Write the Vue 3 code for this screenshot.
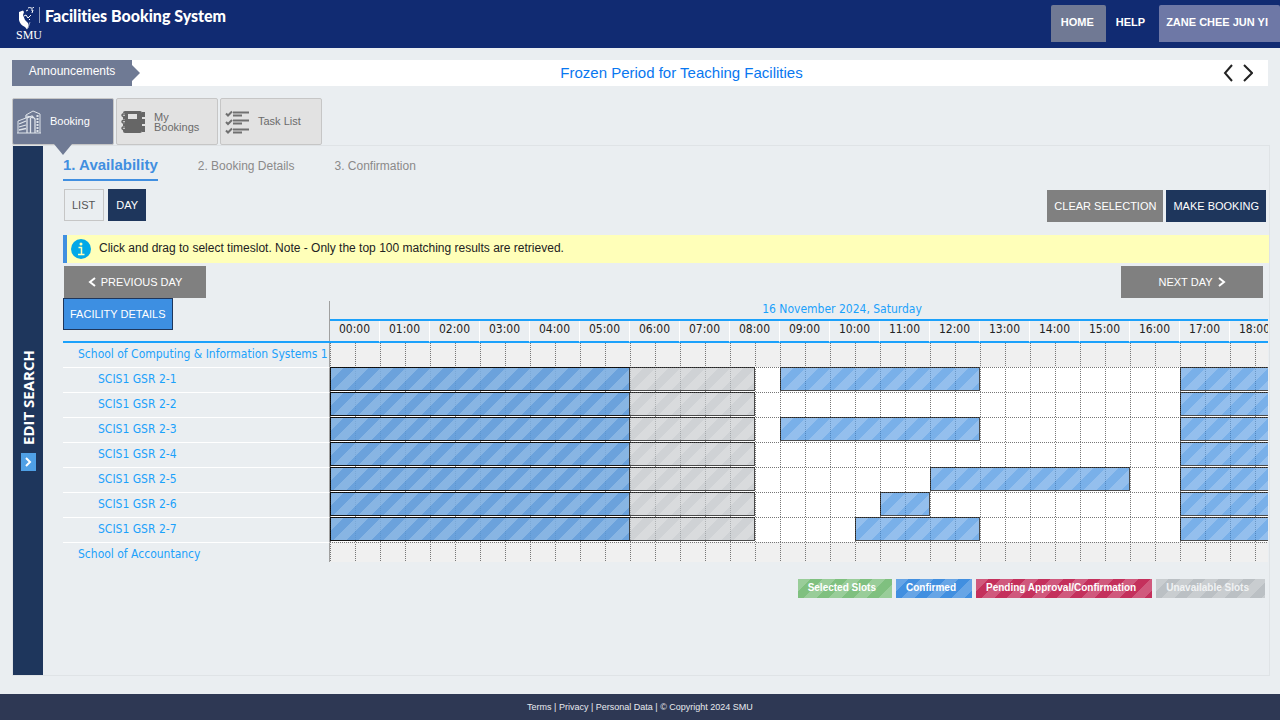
<script setup>
const hours = Array.from({ length: 19 }, (_, h) => String(h).padStart(2, '0') + ':00')

const overnight = [
  { kind: 'unavailable', from: 0, to: 8.5 },
  { kind: 'confirmed', from: 0, to: 6 },
]
const evening = { kind: 'confirmed', from: 17, to: 19 }
const room = (name, ...slots) => ({
  name,
  slots: [...overnight, ...slots.map(([from, to]) => ({ kind: 'confirmed', from, to })), evening],
})

const rows = [
  { name: 'School of Computing & Information Systems 1', group: true, slots: [] },
  room('SCIS1 GSR 2-1', [9, 13]),
  room('SCIS1 GSR 2-2'),
  room('SCIS1 GSR 2-3', [9, 13]),
  room('SCIS1 GSR 2-4'),
  room('SCIS1 GSR 2-5', [12, 16]),
  room('SCIS1 GSR 2-6', [11, 12]),
  room('SCIS1 GSR 2-7', [10.5, 13]),
  { name: 'School of Accountancy', group: true, slots: [] },
]

const legend = [
  { label: 'Selected Slots', kind: 'selected' },
  { label: 'Confirmed', kind: 'confirmed' },
  { label: 'Pending Approval/Confirmation', kind: 'pending' },
  { label: 'Unavailable Slots', kind: 'unavailable' },
]

const span = (s) => ({ gridColumn: `${s.from * 2 + 1} / ${s.to * 2 + 1}` })
</script>

<template>
  <div class="page">
    <header class="top">
      <div class="brand">
        <div class="logo">
          <svg class="crest" viewBox="0 0 18 23" width="18" height="23" aria-hidden="true">
            <path d="M1 5 L5 3.500 L6 5 L5 8 L7 13 L10 16 L11 19 L9 22.500 L7 20 Q2 18 1 13 Z" fill="#fff" />
            <path d="M10 1 Q12 0 13 1 T16 0 M8 4 L10 3 M13 3 H15 L14 6 M6 9 L8 8 L10 11 L13 8 M11 12 L12 13" fill="none" stroke="#fff" stroke-width="1" />
            <path d="M12 15 L11 18 L10 21" fill="none" stroke="#8c9abd" stroke-width="1" />
          </svg>
          <span class="smu">SMU</span>
        </div>
        <h1>Facilities Booking System</h1>
      </div>
      <nav>
        <a href="#" class="home">HOME</a>
        <a href="#" class="help">HELP</a>
        <a href="#" class="user">ZANE CHEE JUN YI</a>
      </nav>
    </header>

    <section class="news">
      <div class="news-label">Announcements</div>
      <a href="#" class="news-link">Frozen Period for Teaching Facilities</a>
      <div class="news-nav">
        <button aria-label="Previous announcement">
          <svg width="10" height="18" viewBox="0 0 10 18"><path d="M9 1 L2 9 L9 17" fill="none" stroke="#222" stroke-width="2" /></svg>
        </button>
        <button aria-label="Next announcement">
          <svg width="10" height="18" viewBox="0 0 10 18"><path d="M1 1 L9 9 L1 17" fill="none" stroke="#222" stroke-width="2" /></svg>
        </button>
      </div>
    </section>

    <div class="tabs">
      <button class="tab active">
        <svg width="24" height="24" viewBox="0 0 24 24" fill="none" stroke="#dfe4ea" stroke-width="1">
          <path d="M1 23 V11 L9 8 M9 5 L16 1 L23 4 V23 M0 23 H24" />
          <path d="M10 23 V8 L15 6 L18 9 V23 M9 8 V5 M10 6 L16 8" stroke-width="1.3" />
          <path d="M2 14 L9 11 M2 17 L9 15 M2 20 L9 18.500 M13.500 8 V23" stroke-width="1.300" />
          <path d="M20.500 5 V22" stroke-width="2" stroke-dasharray="2 1" />
        </svg>
        <span class="single">Booking</span>
      </button>
      <button class="tab">
        <svg width="24" height="24" viewBox="0 0 24 24">
          <path d="M4 1 H19 Q21 1 21 3 V21 Q21 23 19 23 H4 Q2 23 2 21 V3 Q2 1 4 1 Z" fill="#666" />
          <path d="M7 4 H16 V9 H7 Z" fill="#e2e2e2" />
          <path d="M21 2 H24 V7 H21 Z M21 9 H24 V14 H21 Z M21 16 H24 V22 H21 Z" fill="#666" />
          <path d="M0 5 H4 M0 11.500 H4 M0 18 H4" stroke="#e2e2e2" stroke-width="4" />
          <path d="M4 4 H2 Q0 5 2 6.500 H5 M4 10.500 H2 Q0 11.500 2 13 H5 M4 17 H2 Q0 18 2 19.500 H5" stroke="#666" stroke-width="1.500" fill="none" />
        </svg>
        <span>My<br />Bookings</span>
      </button>
      <button class="tab">
        <svg width="24" height="24" viewBox="0 0 24 24" fill="none" stroke="#707070">
          <path d="M1 3.500 L3 5.500 L7 1.500 M1 12 L3 14 L7 10 M1 20.500 L3 22.500 L7 18.500" stroke-width="2" />
          <path d="M8 2.500 H24 M8 10.500 H24 M8 19.500 H24" stroke-width="2" />
          <path d="M8 5.500 H17 M8 13.500 H17 M8 22.500 H17" stroke-width="2" />
        </svg>
        <span class="single">Task List</span>
      </button>
    </div>

    <main class="panel">
      <button class="edit">
        <span class="edit-text">EDIT SEARCH</span>
        <svg width="15" height="18" viewBox="0 0 15 18"><rect width="15" height="18" fill="#4fa0e6" /><path d="M5 5 L9 9 L5 13" fill="none" stroke="#fff" stroke-width="2" /></svg>
      </button>
      <div class="content">
        <ol class="steps">
          <li class="current">1. Availability</li>
          <li>2. Booking Details</li>
          <li>3. Confirmation</li>
        </ol>

        <div class="bar">
          <div class="group-left">
            <button class="btn list">LIST</button>
            <button class="btn navy day">DAY</button>
          </div>
          <div class="group-right">
            <button class="btn grey">CLEAR SELECTION</button>
            <button class="btn navy">MAKE BOOKING</button>
          </div>
        </div>

        <p class="info">
          <svg width="20" height="20" viewBox="0 0 20 20">
            <circle cx="10" cy="10" r="10" fill="#02a8e8" />
            <circle cx="10" cy="5" r="1.500" fill="#ffffb9" />
            <path d="M7.500 8.500 H10.500 V15.500 M7 15.500 H13.500" fill="none" stroke="#ffffb9" stroke-width="1.500" />
          </svg>
          <span>Click and drag to select timeslot. Note - Only the top 100 matching results are retrieved.</span>
        </p>

        <div class="days">
          <button class="btn grey">
            <svg width="8" height="10" viewBox="0 0 8 10"><path d="M7 1 L2 5 L7 9" fill="none" stroke="#fff" stroke-width="2" /></svg>
            PREVIOUS DAY
          </button>
          <button class="btn grey">
            NEXT DAY
            <svg width="8" height="10" viewBox="0 0 8 10"><path d="M1 1 L6 5 L1 9" fill="none" stroke="#fff" stroke-width="2" /></svg>
          </button>
        </div>

        <div class="schedule">
          <table>
            <colgroup>
              <col class="names" />
              <col v-for="h in hours" :key="h" class="hour-col" />
            </colgroup>
            <thead>
              <tr>
                <th rowspan="2" class="corner"><button class="btn blue">FACILITY DETAILS</button></th>
                <th :colspan="hours.length" class="date">16 November 2024, Saturday</th>
              </tr>
              <tr>
                <th v-for="h in hours" :key="h" class="hour">{{ h }}</th>
              </tr>
            </thead>
            <tbody>
              <tr v-for="r in rows" :key="r.name" :class="{ group: r.group }">
                <th scope="row">{{ r.name }}</th>
                <td :colspan="hours.length">
                  <div class="track">
                    <div v-for="(s, i) in r.slots" :key="i" class="slot stripes" :class="s.kind" :style="span(s)"></div>
                  </div>
                </td>
              </tr>
            </tbody>
          </table>
        </div>

        <ul class="legend">
          <li v-for="l in legend" :key="l.kind" class="stripes" :class="l.kind">{{ l.label }}</li>
        </ul>
      </div>
    </main>

    <footer>
      <a href="#">Terms</a> | <a href="#">Privacy</a> | <a href="#">Personal Data</a> | © Copyright 2024 SMU
    </footer>
  </div>
</template>

<style>
body {
  margin: 0;
  background: #eaeef1;
}
</style>

<style scoped>
* {
  box-sizing: border-box;
}
.page {
  min-height: 100vh;
  display: flex;
  flex-direction: column;
  font-family: "Liberation Sans", Arial, sans-serif;
  font-size: 12px;
  color: #222;
}
a {
  color: inherit;
  text-decoration: none;
}
button {
  font: inherit;
  border: 0;
  padding: 0;
  background: none;
  cursor: pointer;
}
svg {
  display: block;
  flex: none;
}

.top {
  height: 48px;
  background: #112b72;
  color: #fff;
  display: flex;
  justify-content: space-between;
}
.brand {
  display: flex;
  padding: 7px 0 0 16px;
}
.logo {
  display: flex;
  flex-direction: column;
  width: 27px;
}
.crest {
  margin-left: 2px;
}
.smu {
  font: 12px/10px "Liberation Serif", serif;
}
h1 {
  height: 16px;
  margin: 0 0 0 -4px;
  padding-left: 5px;
  border-left: 1px solid #8c9abd;
  font: 900 16px/17px Lato, "Liberation Sans", sans-serif;
  font-variant-ligatures: none;
  white-space: nowrap;
}
nav {
  display: flex;
  padding-top: 5px;
  font-size: 11px;
  font-weight: bold;
  line-height: 35px;
}
nav a {
  height: 37px;
  border-radius: 2px 2px 0 0;
}
.home {
  background: #707994;
  padding: 0 12px 0 10px;
}
.help {
  padding: 0 14px 0 10px;
}
.user {
  background: #6e78a6;
  padding: 0 12px 0 7px;
}

.news {
  margin: 12px 12px 0;
  height: 26px;
  background: #fff;
  display: flex;
  align-items: center;
}
.news-label {
  position: relative;
  width: 120px;
  height: 26px;
  line-height: 23px;
  text-align: center;
  background: #6f7a94;
  color: #fff;
}
.news-label::after {
  content: "";
  position: absolute;
  left: 100%;
  top: 5px;
  border: 8px solid transparent;
  border-left-color: #6f7a94;
  border-right: 0;
}
.news-link {
  flex: 1;
  padding: 0 0 2px 16px;
  text-align: center;
  font-size: 15px;
  color: #0877f0;
}
.news-nav {
  display: flex;
  gap: 10px;
  padding: 0 15px 0 8px;
}

.tabs {
  display: flex;
  gap: 2px;
  margin: 12px 12px 0;
}
.tab {
  position: relative;
  width: 102px;
  height: 47px;
  padding-left: 4px;
  display: flex;
  align-items: center;
  gap: 9px;
  text-align: left;
  font-size: 11px;
  line-height: 10px;
  color: #6b6b6b;
  background: #e2e2e2;
  border: 1px solid #c6c6c6;
  border-radius: 2px;
}
.single {
  padding-bottom: 2px;
}
.tab.active {
  background: #6f7a94;
  color: #fff;
}
.tab.active::after {
  content: "";
  position: absolute;
  left: 41px;
  top: 45px;
  z-index: 1;
  border: 9px solid transparent;
  border-top: 11px solid #6f7a94;
  border-bottom: 0;
}

.panel {
  flex: 1;
  display: flex;
  margin: 0 10px 18px 12px;
  border: 1px solid #dfe3e6;
}
.edit {
  width: 30px;
  flex: none;
  background: #1e365c;
  color: #fff;
  display: flex;
  flex-direction: column;
  align-items: center;
  justify-content: center;
  gap: 8px;
}
.edit-text {
  writing-mode: vertical-rl;
  transform: rotate(180deg);
  font: bold 15px/18px "Open Sans", sans-serif;
}
.content {
  flex: 1;
  min-width: 0;
  padding-left: 20px;
}
.steps {
  list-style: none;
  display: flex;
  gap: 40px;
  height: 35px;
  margin: 0;
  padding: 0;
  color: #8a8a8a;
  line-height: 41px;
}
.current {
  font-size: 15px;
  font-weight: bold;
  line-height: 37px;
  color: #418fe0;
  border-bottom: 2px solid #418fe0;
}
.btn {
  height: 32px;
  padding: 0 7px;
  font-size: 11px;
  color: #fff;
}
.list {
  border: 1px solid #c6c6c6;
  padding: 0 8px 0 7px;
  color: #555;
}
.navy {
  background: #1e365c;
}
.day {
  padding: 0 8px;
}
.grey {
  background: #808080;
}
.blue {
  background: #3d8fe2;
  border: 1px solid #1e365c;
  padding: 0 6px;
}
.bar {
  display: flex;
  justify-content: space-between;
  padding: 8px 3px 0 1px;
}
.group-left {
  display: flex;
  gap: 4px;
}
.group-right {
  display: flex;
  gap: 3px;
  padding-top: 1px;
}
.info {
  display: flex;
  align-items: center;
  gap: 8px;
  height: 28px;
  margin: 13px 0 3px;
  padding-left: 4px;
  background: #ffffb9;
  border-left: 4px solid #418fe0;
}
.info span {
  padding-bottom: 3px;
}
.days {
  display: flex;
  justify-content: space-between;
  padding: 0 6px 0 1px;
}
.days .btn {
  width: 142px;
  display: flex;
  align-items: center;
  justify-content: center;
  gap: 5px;
}

.schedule {
  overflow: hidden;
  margin-right: 1px;
  font-family: "DejaVu Sans Condensed", "DejaVu Sans", sans-serif;
}
table {
  width: 1217px;
  table-layout: fixed;
  border-spacing: 0;
}
.names {
  width: 267px;
}
.hour-col {
  width: 50px;
}
th,
td {
  padding: 0;
  font-weight: normal;
}
.corner {
  text-align: left;
  vertical-align: top;
  border-bottom: 2px solid #1ba1fb;
  background: linear-gradient(#a0a0a0, #a0a0a0) 100% 3px / 1px 100% no-repeat;
}
.corner .btn {
  display: block;
  font-family: "Liberation Sans", Arial, sans-serif;
}
.date {
  height: 23px;
  padding-left: 74px;
  color: #1ba1fb;
  border-bottom: 2px solid #1ba1fb;
}
.hour {
  height: 22px;
  padding-bottom: 5px;
  border-right: 1px solid #fff;
  border-bottom: 2px solid #1ba1fb;
}
tbody th {
  height: 25px;
  padding: 0 0 2px 35px;
  text-align: left;
  white-space: nowrap;
  color: #1ba1fb;
  border-top: 1px solid #fff;
  border-right: 1px solid #a0a0a0;
}
tbody .group th {
  padding-left: 15px;
}
tbody tr:first-child th {
  height: 24px;
  border-top: 0;
}
tbody tr:last-child th {
  height: 20px;
  padding-top: 2px;
  padding-bottom: 0;
}
.track {
  --row: #fff;
  display: grid;
  grid-template-columns: repeat(38, 25px);
  height: 25px;
  background:
    linear-gradient(90deg, transparent 50%, var(--row) 50%) 0 0 / 2px 1px repeat-x,
    linear-gradient(#777, #777) 0 0 / 100% 1px no-repeat,
    repeating-linear-gradient(transparent 0 1px, var(--row) 1px 2px),
    repeating-linear-gradient(90deg, #777 0 1px, var(--row) 1px 25px);
}
.group .track {
  --row: #f0f0f0;
  height: 20px;
}
tr:first-child .track {
  height: 24px;
  background:
    repeating-linear-gradient(transparent 0 1px, var(--row) 1px 2px),
    repeating-linear-gradient(90deg, #777 0 1px, var(--row) 1px 25px);
}
.slot {
  grid-row: 1;
  height: 24px;
  border: 1px solid #000;
  opacity: 0.7;
}
.stripes {
  background-image: linear-gradient(
    135deg,
    rgba(255, 255, 255, 0.2) 25%,
    transparent 25% 50%,
    rgba(255, 255, 255, 0.2) 50% 75%,
    transparent 75%
  );
  background-size: 25px 25px;
}
.selected {
  background-color: #7fc07f;
}
.confirmed {
  background-color: #418fe0;
}
.pending {
  background-color: #c4305c;
}
.unavailable {
  background-color: #bbc0c4;
}
.legend {
  list-style: none;
  display: flex;
  justify-content: flex-end;
  gap: 4px;
  margin: 17px 4px 0 0;
  padding: 0;
  color: #fff;
  font-size: 10px;
  font-weight: bold;
  line-height: 18px;
}
.legend li {
  height: 19px;
  padding: 0 16px 0 10px;
}
.legend .unavailable {
  color: #f0f2f3;
}

footer {
  height: 26px;
  background: #2e3854;
  color: #e8eaee;
  font-size: 9px;
  line-height: 26px;
  text-align: center;
}
</style>
